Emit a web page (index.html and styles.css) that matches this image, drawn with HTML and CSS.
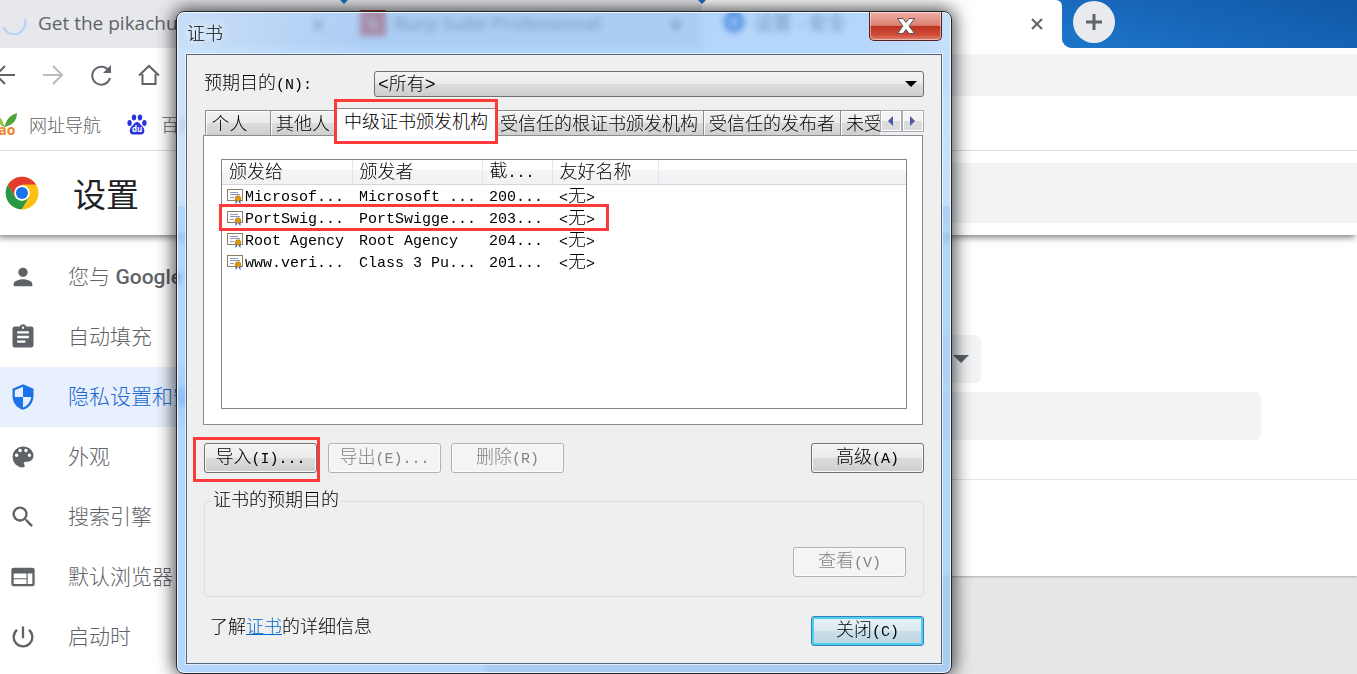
FILE: index.html
```html
<!DOCTYPE html>
<html lang="zh-CN">
<head>
    <meta charset="UTF-8">
    <meta name="viewport" content="width=device-width, initial-scale=1.0">
    <title>设置 - 安全</title>
    <link rel="stylesheet" href="styles.css">
</head>
<body>
    <div class="tab-strip">
        <div class="browser-tab">
            <svg class="spinner" viewBox="0 0 24 24"><path d="M22 8a11 11 0 1 1-21 8" fill="none" stroke="#bcd3f7" stroke-width="2.4"/></svg>
            <span class="tab-title">Get the pikachu</span>
            <button class="tab-close" aria-label="关闭标签页"><svg viewBox="0 0 12 12"><path d="M1 1l10 10M11 1L1 11"/></svg></button>
        </div>
        <div class="browser-tab">
            <span class="burp-icon">ϟ</span>
            <span class="tab-title">Burp Suite Professional</span>
            <button class="tab-close" aria-label="关闭标签页"><svg viewBox="0 0 12 12"><path d="M1 1l10 10M11 1L1 11"/></svg></button>
        </div>
        <div class="browser-tab active">
            <svg class="gear" viewBox="0 0 24 24"><circle cx="12" cy="12" r="7" fill="none" stroke="#1a5fc8" stroke-width="7"/></svg>
            <span class="tab-title">设置 - 安全</span>
            <button class="tab-close" aria-label="关闭标签页"><svg viewBox="0 0 12 12"><path d="M1 1l10 10M11 1L1 11"/></svg></button>
        </div>
        <div class="strip-rest">
            <button class="new-tab" aria-label="新标签页"><svg viewBox="0 0 18 18"><path d="M9 1v16M1 9h16"/></svg></button>
        </div>
    </div>

    <nav class="toolbar">
        <button aria-label="后退"><svg viewBox="0 0 24 24"><path d="M22 12H3M12 3l-9 9 9 9"/></svg></button>
        <button aria-label="前进" class="dim"><svg viewBox="0 0 24 24"><path d="M2 12h19M12 3l9 9-9 9"/></svg></button>
        <button aria-label="重新加载"><svg viewBox="0 0 24 24"><path d="M20 8a9 9 0 1 0 1 7"/><path d="M22 2v8h-8z" fill="#5f6368" stroke="none"/></svg></button>
        <button aria-label="主页"><svg viewBox="0 0 24 24"><path d="M2 12.500l10-9.500 10 9.500M5.500 11v10h13V11"/></svg></button>
        <input class="address" type="text" aria-label="地址栏">
    </nav>

    <div class="bookmarks">
        <a href="#">
            <svg class="hao" viewBox="0 0 30 24"><path d="M12 7c1 4 3 6 5 7C18 8 22 3 29 1c0 7-4 12-12 14-4-1-6-4-5-8z" fill="#4da63c"/><path d="M9 4c4 1 6 5 7 10-4-1-7-4-7-10z" fill="#9bc53a"/><text x="1" y="23" class="hao-text">hao</text></svg>
            <span>网址导航</span>
        </a>
        <a href="#">
            <svg class="baidu" viewBox="0 0 20 21"><g fill="#2932e1"><ellipse cx="2.6" cy="9" rx="2.2" ry="2.9"/><ellipse cx="7" cy="3.4" rx="2.2" ry="3"/><ellipse cx="13" cy="3.4" rx="2.2" ry="3"/><ellipse cx="17.4" cy="9" rx="2.2" ry="2.9"/><path d="M10 8c-2.500 0-3.500 3-5.500 4.500S1.500 20.500 6 20.500h8c4.500 0 4-6 1.500-8S12.500 8 10 8z"/></g><text x="5" y="18" class="baidu-text">du</text></svg>
            <span>百度</span>
        </a>
    </div>

    <header class="settings-header">
        <svg class="chrome" viewBox="0 0 48 48">
            <circle cx="24" cy="24" r="23" fill="#fbbc05"/>
            <path d="M4.100 12.500A23 23 0 0 1 43.900 12.500H24L14 29.800z" fill="#e33b2e"/>
            <path d="M4.100 12.500A23 23 0 0 0 24 47l10-17.200L24 35.500l-10-5.700z" fill="#269a48"/>
            <path d="M24 12.500h19.900A23 23 0 0 1 24 47l10-17.300z" fill="#fdbf12"/>
            <circle cx="24" cy="24" r="11" fill="#fff"/><circle cx="24" cy="24" r="8.600" fill="#1a73e8"/>
        </svg>
        <h1>设置</h1>
        <input class="search" type="search" aria-label="在设置中搜索">
    </header>

    <div class="settings-body">
        <aside class="sidebar">
            <a href="#"><svg viewBox="0 0 24 24"><path d="M12 12c2.200 0 4-1.800 4-4s-1.800-4-4-4-4 1.800-4 4 1.800 4 4 4zm0 2c-2.700 0-8 1.300-8 4v2h16v-2c0-2.700-5.300-4-8-4z"/></svg><span>您与 <b>Google</b></span></a>
            <a href="#"><svg viewBox="0 0 24 24"><path d="M19 3h-4.200a3 3 0 0 0-5.600 0H5a2 2 0 0 0-2 2v14a2 2 0 0 0 2 2h14a2 2 0 0 0 2-2V5a2 2 0 0 0-2-2zm-7 0a1 1 0 1 1 0 2 1 1 0 0 1 0-2zm2 14H7v-2h7zm3-4H7v-2h10zm0-4H7V7h10z"/></svg><span>自动填充</span></a>
            <a href="#" class="selected"><svg viewBox="0 0 24 24"><path d="M12 1L3 5v6c0 5.600 3.800 10.700 9 12 5.200-1.300 9-6.400 9-12V5zm0 11h7c-.5 4.100-3.300 7.800-7 8.900V12H5V6.300l7-3.100z"/></svg><span>隐私设置和安全性</span></a>
            <a href="#"><svg viewBox="0 0 24 24"><path d="M12 3a9 9 0 0 0 0 18c.8 0 1.500-.7 1.500-1.500 0-.4-.2-.7-.4-1-.2-.3-.4-.6-.4-1 0-.8.7-1.500 1.500-1.500H16a5 5 0 0 0 5-5c0-4.400-4-8-9-8zm-5.500 9a1.500 1.500 0 1 1 0-3 1.500 1.500 0 0 1 0 3zm3-4a1.500 1.500 0 1 1 0-3 1.500 1.500 0 0 1 0 3zm5 0a1.500 1.500 0 1 1 0-3 1.500 1.500 0 0 1 0 3zm3 4a1.500 1.500 0 1 1 0-3 1.500 1.500 0 0 1 0 3z"/></svg><span>外观</span></a>
            <a href="#"><svg viewBox="0 0 24 24"><path d="M15.500 14h-.8l-.3-.3A6.500 6.500 0 1 0 13.700 14.400l.3.3v.8l5 5 1.500-1.500zm-6 0a4.500 4.500 0 1 1 0-9 4.500 4.500 0 0 1 0 9z"/></svg><span>搜索引擎</span></a>
            <a href="#"><svg viewBox="0 0 24 24"><path d="M20 4H4a2 2 0 0 0-2 2v12a2 2 0 0 0 2 2h16a2 2 0 0 0 2-2V6a2 2 0 0 0-2-2zm-5 14H4v-4h11zm0-5H4V9h11zm5 5h-4V9h4z"/></svg><span>默认浏览器</span></a>
            <a href="#"><svg viewBox="0 0 24 24"><path d="M13 3h-2v10h2zm4.800 2.200l-1.400 1.400A7 7 0 1 1 7.600 6.600L6.200 5.200a9 9 0 1 0 11.600 0z"/></svg><span>启动时</span></a>
        </aside>
        <main class="settings-main">
            <div class="card">
                <button class="dropdown" aria-label="选择提供商"><svg viewBox="0 0 16 8"><path d="M0 0h16L8 8z"/></svg></button>
                <input class="provider" type="text" aria-label="自定义提供商">
                <div class="card-row"></div>
            </div>
        </main>
    </div>

    <div class="dialog" role="dialog" aria-labelledby="dialog-title">
        <div class="title-bar">
            <span id="dialog-title">证书</span>
            <button class="close-btn" aria-label="关闭"><svg viewBox="0 0 20 18"><path d="M1.500 1.500h5.500l3 4 3-4h5.500L13 9l5.500 7.500H13l-3-4-3 4H1.500L7 9z"/></svg></button>
        </div>
        <div class="client">
            <div class="purpose">
                <label for="purpose">预期目的<span class="latin">(N):</span></label>
                <select id="purpose">
                    <option>&lt;所有&gt;</option>
                </select>
            </div>

            <div class="cert-tabs" role="tablist">
                <button role="tab">个人</button>
                <button role="tab">其他人</button>
                <button role="tab" class="current marked" aria-selected="true">中级证书颁发机构</button>
                <button role="tab">受信任的根证书颁发机构</button>
                <button role="tab">受信任的发布者</button>
                <button role="tab" class="cut">未受信任的发布者</button>
                <div class="tab-scroll">
                    <button aria-label="向左"><svg viewBox="0 0 6 10"><path d="M5 0v10L0 5z"/></svg></button>
                    <button aria-label="向右"><svg viewBox="0 0 6 10"><path d="M0 0v10l5-5z"/></svg></button>
                </div>
            </div>

            <div class="tab-panel">
                <div class="cert-list">
                    <table>
                        <colgroup><col class="c-name"><col class="c-name"><col class="c-date"><col class="c-friendly"><col></colgroup>
                        <thead>
                            <tr><th>颁发给</th><th>颁发者</th><th>截<span class="latin">...</span></th><th>友好名称</th><th></th></tr>
                        </thead>
                        <tbody>
                            <tr><td><svg class="cert"><use href="#cert"/></svg>Microsof...</td><td>Microsoft ...</td><td>200...</td><td>&lt;<span class="han">无</span>&gt;</td><td></td></tr>
                            <tr><td class="marked"><svg class="cert"><use href="#cert"/></svg>PortSwig...</td><td>PortSwigge...</td><td>203...</td><td>&lt;<span class="han">无</span>&gt;</td><td></td></tr>
                            <tr><td><svg class="cert"><use href="#cert"/></svg>Root Agency</td><td>Root Agency</td><td>204...</td><td>&lt;<span class="han">无</span>&gt;</td><td></td></tr>
                            <tr><td><svg class="cert"><use href="#cert"/></svg>www.veri...</td><td>Class 3 Pu...</td><td>201...</td><td>&lt;<span class="han">无</span>&gt;</td><td></td></tr>
                        </tbody>
                    </table>
                </div>
            </div>

            <div class="actions">
                <button class="btn marked">导入<span class="latin">(I)...</span></button>
                <button class="btn" disabled>导出<span class="latin">(E)...</span></button>
                <button class="btn" disabled>删除<span class="latin">(R)</span></button>
                <button class="btn push">高级<span class="latin">(A)</span></button>
            </div>

            <fieldset>
                <legend>证书的预期目的</legend>
                <button class="btn" disabled>查看<span class="latin">(V)</span></button>
            </fieldset>

            <div class="footer">
                <p>了解<a href="#">证书</a>的详细信息</p>
                <button class="btn default">关闭<span class="latin">(C)</span></button>
            </div>
        </div>
    </div>

    <svg class="symbols">
        <symbol id="cert" viewBox="0 0 17 15">
            <rect x=".5" y=".5" width="15" height="11" fill="#fffef8" stroke="#8b7d68"/>
            <path d="M3 3.500h8M3 5.500h10M3 8.500h4" stroke="#8d95c9" fill="none"/>
            <path d="M8.500 10v5l1.500-1.500V11M12 11v2.500l1.500 1.500v-5" fill="#2f62d9"/>
            <circle cx="11" cy="9.500" r="2.800" fill="#d99a12" stroke="#a87208" stroke-width=".6"/>
        </symbol>
    </svg>
</body>
</html>
```
FILE: styles.css
```css
*,
*::before,
*::after {
    margin: 0;
    padding: 0;
    box-sizing: border-box;
}
body {
    display: flex;
    flex-direction: column;
    height: 100vh;
    overflow: hidden;
    position: relative;
    background-color: #fff;
    color: #5f6368;
    font-family: "Open Sans", "Noto Sans CJK SC", sans-serif;
}
button {
    border: none;
    background: none;
    font: inherit;
    color: inherit;
}
input {
    border: none;
    outline: none;
}
a {
    text-decoration: none;
    color: inherit;
}
.symbols {
    position: absolute;
    width: 0;
    height: 0;
}

/* browser tabs */
.tab-strip {
    display: flex;
    flex: none;
    height: 48px;
    background-color: #1a6fc4;
}
.browser-tab {
    display: flex;
    align-items: center;
    gap: 8px;
    width: 358px;
    padding: 0 16px 2px;
    position: relative;
    background-color: #e7e8ec;
    font-size: 19px;
}
.browser-tab:first-child {
    width: 344px;
    padding-left: 2px;
    gap: 11px;
}
.browser-tab.active {
    width: 360px;
    padding: 0 15px 4px 20px;
    background-color: #fff;
    border-radius: 0 6px 0 0;
}
.browser-tab + .browser-tab::before {
    content: "";
    position: absolute;
    left: -4px;
    top: 0;
    border: 4px solid transparent;
    border-top-color: #1a6fc4;
    border-bottom: none;
}
.tab-title {
    flex: 1;
    white-space: nowrap;
    overflow: hidden;
}
.spinner {
    width: 25px;
    height: 24px;
}
.gear {
    width: 24px;
    height: 24px;
}
.burp-icon {
    width: 26px;
    height: 26px;
    background-color: #d8402c;
    color: #fff;
    text-align: center;
    line-height: 26px;
}
.tab-close {
    width: 20px;
    height: 24px;
}
.tab-close svg {
    width: 12px;
    height: 12px;
    fill: none;
    stroke: #5f6368;
    stroke-width: 2;
}
.strip-rest {
    flex: 1;
    padding: 1px 11px;
    background: linear-gradient(15deg, #1c74c8 10%, #1765b8 50%, #1158a6);
    border-bottom-left-radius: 10px;
    box-shadow: -8px 8px 0 #fff;
}
.new-tab {
    display: grid;
    place-items: center;
    width: 42px;
    height: 42px;
    border-radius: 50%;
    background-color: #e8eaed;
}
.new-tab svg {
    width: 18px;
    height: 18px;
    fill: none;
    stroke: #5f6368;
    stroke-width: 3;
}

/* toolbar and bookmarks */
.toolbar {
    display: flex;
    align-items: center;
    gap: 24px;
    flex: none;
    height: 54px;
    margin-left: -7px;
    position: relative;
    background-color: #fff;
}
.toolbar button {
    width: 24px;
    height: 24px;
}
.toolbar svg {
    width: 24px;
    height: 24px;
    fill: none;
    stroke: #5f6368;
    stroke-width: 2;
}
.toolbar .dim svg {
    stroke: #bbb;
}
.address {
    flex: 1;
    height: 42px;
    margin-left: 20px;
    border-radius: 21px 0 0 21px;
    background-color: #f1f3f4;
}
.bookmarks {
    display: flex;
    align-items: center;
    gap: 26px;
    flex: none;
    height: 49px;
    margin-left: -12px;
    padding-bottom: 4px;
    border-bottom: 1px solid #dadce0;
    font-size: 18px;
    font-weight: 300;
}
.bookmarks a {
    display: flex;
    align-items: center;
    gap: 11px;
}
.hao {
    width: 30px;
    height: 24px;
}
.hao-text {
    font: bold 14px "Open Sans", sans-serif;
    fill: #f08326;
}
.baidu {
    width: 20px;
    height: 21px;
    margin-right: 3px;
}
.baidu-text {
    font: bold 8px "Open Sans", sans-serif;
    fill: #fff;
}

/* settings page */
.settings-header {
    display: flex;
    align-items: center;
    flex: none;
    height: 84px;
    margin-right: -8px;
    padding-left: 5px;
    position: relative;
    background-color: #fff;
    box-shadow: -6px 6px 7px -4px rgba(0, 0, 0, 0.55);
}
.chrome {
    width: 34px;
    height: 34px;
}
.settings-header h1 {
    margin-left: 34px;
    font-size: 33px;
    font-weight: 400;
    color: #202124;
}
.search {
    flex: 1;
    height: 60px;
    margin-left: 347px;
    background-color: #f1f3f4;
}
.settings-body {
    display: flex;
    flex: 1;
    min-height: 0;
}
.sidebar {
    width: 485px;
    padding-top: 12px;
}
.sidebar a {
    display: flex;
    align-items: center;
    gap: 31px;
    width: 322px;
    height: 60px;
    padding-left: 9px;
    font-size: 21px;
    font-weight: 300;
}
.sidebar span {
    padding-bottom: 4px;
}
.sidebar b {
    font-family: Roboto, sans-serif;
    font-weight: 500;
}
.sidebar svg {
    width: 28px;
    height: 28px;
    fill: #5f6368;
}
.sidebar .selected {
    background-color: #e8f0fe;
    color: #1967d2;
}
.sidebar .selected svg {
    fill: #1a73e8;
}
.settings-main {
    flex: 1;
    background-color: #e7e7e7;
}
.card {
    display: flex;
    flex-direction: column;
    gap: 9px;
    padding-top: 100px;
    background-color: #fff;
    box-shadow: 0 1px 2px rgba(0, 0, 0, 0.25);
}
.dropdown {
    display: flex;
    justify-content: flex-end;
    align-items: center;
    width: 396px;
    height: 48px;
    margin-left: 100px;
    padding-right: 12px;
    border-radius: 6px;
    background-color: #f1f3f4;
}
.dropdown svg {
    width: 16px;
    height: 8px;
    fill: #5f6368;
}
.provider {
    height: 48px;
    margin: 0 96px 0 100px;
    border-radius: 6px;
    background-color: #f1f3f4;
}
.card-row {
    height: 97px;
    margin-top: 30px;
    border-top: 1px solid #e6e6e6;
}

/* certificate window */
.dialog {
    position: absolute;
    left: 176px;
    top: 11px;
    width: 776px;
    padding: 0 9px 9px;
    border: 1px solid #20262e;
    border-radius: 8px;
    background: linear-gradient(100deg, rgba(255, 255, 255, 0.35), transparent 25%, transparent 85%, rgba(255, 255, 255, 0.3)) top / 100% 194px no-repeat, rgba(132, 187, 248, 0.6);
    backdrop-filter: blur(3px);
    box-shadow: inset 0 0 0 1px rgba(255, 255, 255, 0.8), 0 0 18px 2px rgba(0, 0, 0, 0.75);
    color: #000;
    font-family: "Liberation Mono", "Noto Sans CJK SC", monospace;
    font-size: 18px;
    font-weight: 300;
    line-height: 22px;
}
.latin {
    font-size: 15px;
}
.han {
    font-size: 18px;
}
.title-bar {
    display: flex;
    justify-content: space-between;
    height: 42px;
    padding-left: 1px;
}
.title-bar span {
    padding-top: 12px;
    text-shadow: 0 0 10px #fff, 0 0 10px #fff;
}
.close-btn {
    display: grid;
    place-items: center;
    width: 73px;
    height: 29px;
    border: 1px solid #5b1d1d;
    border-top: none;
    border-radius: 0 0 5px 5px;
    background: linear-gradient(#f0b0a5, #dc8072 48%, #bb3220 50%, #cf4a36 80%, #e1806c);
    box-shadow: inset 0 0 0 1px rgba(255, 255, 255, 0.45);
}
.close-btn svg {
    width: 20px;
    height: 18px;
    fill: #fff;
    stroke: #5a5560;
}
.client {
    padding: 16px 17px 17px;
    border: 1px solid #56677a;
    box-shadow: 0 0 0 1px rgba(255, 255, 255, 0.6);
    background-color: #efefef;
}
.purpose {
    display: grid;
    grid-template-columns: 170px 1fr;
    align-items: center;
    position: relative;
}
.purpose label {
    padding-top: 2px;
}
.purpose select {
    height: 26px;
    padding: 2px 3px 0;
    appearance: none;
    border: 1px solid #707070;
    border-radius: 3px;
    background: linear-gradient(#f3f3f3, #ebebeb 49%, #dcdcdc 50%, #cecece);
    font: inherit;
    color: #000;
}
.purpose::after {
    content: "";
    position: absolute;
    right: 7px;
    top: 10px;
    border: 6px solid transparent;
    border-top-color: #000;
    border-bottom: none;
}
.marked {
    position: relative;
}
.marked::after {
    content: "";
    position: absolute;
    inset: -7px -4px -10px -12px;
    border: 3px solid #fb3a3a;
    pointer-events: none;
}
.cert-tabs {
    display: flex;
    align-items: flex-end;
    height: 26px;
    margin-top: 12px;
    padding-left: 1px;
}
.cert-tabs > button {
    flex: none;
    height: 25px;
    padding: 3px 5px 0;
    border: 1px solid #8a8d96;
    border-bottom: none;
    border-left-width: 0;
    background: linear-gradient(#f3f3f3, #ebebeb 49%, #dcdcdc 50%, #cfcfcf);
    box-shadow: inset 1px 1px 0 #fbfbfb;
    white-space: nowrap;
}
.cert-tabs > button:first-child {
    width: 66px;
    padding-right: 22px;
    border-left-width: 1px;
}
.cert-tabs > .current {
    height: 28px;
    margin-bottom: -1px;
    padding: 0 7px 0 8px;
    background: #fff;
    z-index: 1;
}
.cert-tabs > .current + button {
    padding-left: 4px;
}
.cert-tabs .marked::after {
    inset: -10px -3px -8px -2px;
}
.cert-tabs > .cut {
    flex: 1 1 0;
    min-width: 0;
    overflow: hidden;
    text-align: left;
    border-right: none;
}
.tab-scroll {
    display: flex;
    align-self: flex-start;
    padding-top: 1px;
}
.tab-scroll button {
    display: grid;
    place-items: center;
    width: 22px;
    height: 22px;
    border: 1px solid #a9abb3;
    background: linear-gradient(#f3f3f3 49%, #dcdcdc 50%);
    box-shadow: inset 0 0 0 1px #fff;
}
.tab-scroll svg {
    width: 6px;
    height: 10px;
    fill: #4b5ba8;
}
.tab-panel {
    padding: 23px 15px 15px 17px;
    margin: 0 1px 0 -1px;
    border: 1px solid #8a8d96;
    background-color: #fff;
}
.cert-list {
    height: 250px;
    border: 1px solid #82858f;
}
.cert-list table {
    width: 100%;
    table-layout: fixed;
    border-collapse: collapse;
    text-align: left;
    white-space: nowrap;
    font-size: 15px;
    line-height: 16px;
}
.c-name {
    width: 130px;
}
.c-date {
    width: 70px;
}
.c-friendly {
    width: 106px;
}
.cert-list th {
    height: 24px;
    padding: 3px 0 0 7px;
    border-right: 1px solid #e3e5e8;
    border-bottom: 1px solid #d5d5d5;
    background: linear-gradient(#fff 40%, #f4f5f7 42%, #f1f2f4);
    font-size: 18px;
    font-weight: 300;
}
.cert-list th:last-child {
    border-right: none;
}
.cert-list td {
    height: 22px;
    padding: 4px 0 0 7px;
}
.cert-list td:first-child {
    padding-left: 5px;
}
.cert-list .marked::after {
    inset: -3px auto -2px -3px;
    width: 390px;
}
.cert {
    width: 17px;
    height: 15px;
    margin-right: 1px;
    vertical-align: -3px;
}
.actions {
    display: flex;
    gap: 10px;
    margin-top: 18px;
}
.actions .marked {
    margin-right: 1px;
}
.btn {
    width: 113px;
    height: 30px;
    padding-top: 2px;
    border: 1px solid #707070;
    border-radius: 3px;
    background: linear-gradient(#f3f3f3, #ebebeb 49%, #dcdcdc 50%, #cecece);
    box-shadow: inset 0 0 0 1px #fbfbfb;
}
.btn:disabled {
    border-color: #adb2b5;
    background: #f4f4f4;
    color: #838383;
}
.btn.default {
    border-color: #3c7fb1;
    background: linear-gradient(#eaf3f7, #dceaf0 49%, #c9dfe9 50%, #bcd5e2);
    box-shadow: inset 0 0 0 2px #48d0f5;
}
.push {
    margin-left: auto;
}
fieldset {
    display: flex;
    justify-content: flex-end;
    margin-top: 17px;
    padding: 35px 17px 19px 7px;
    border: 1px solid #d5dfe5;
    border-radius: 4px;
}
legend {
    padding: 0 2px 0 1px;
}
.footer {
    display: flex;
    justify-content: space-between;
    align-items: center;
    margin-top: 19px;
    padding-left: 6px;
}
.footer p {
    padding-bottom: 6px;
}
.footer a {
    color: #0066cc;
    text-decoration: underline;
}
```
